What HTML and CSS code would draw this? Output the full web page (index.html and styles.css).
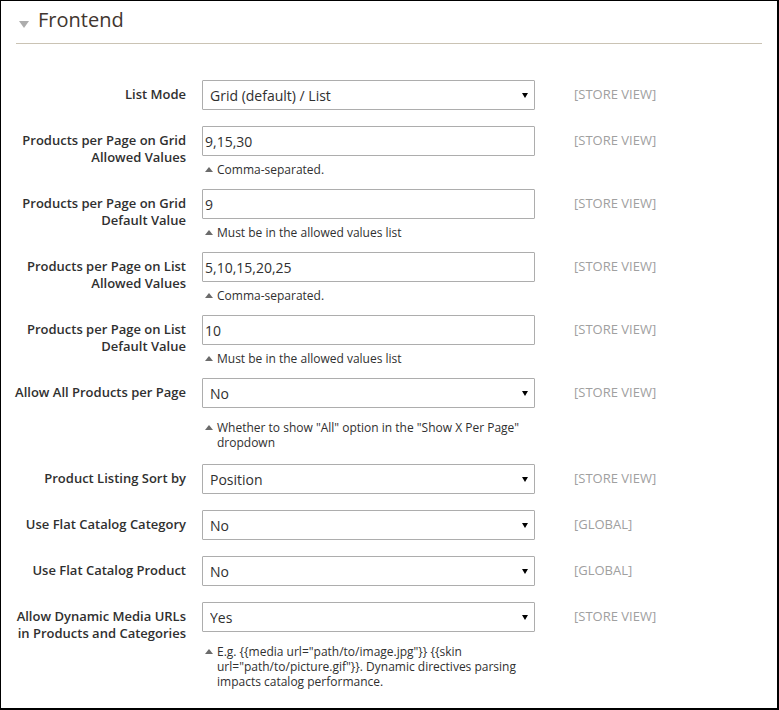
FILE: index.html
```html
<!DOCTYPE html>
<html lang="en">
<head>
<meta charset="utf-8">
<title>Frontend</title>
<link rel="stylesheet" href="styles.css">
</head>
<body>
<div class="frame">
  <div class="section-head">
    <span class="caret"></span>
    <h2 class="title">Frontend</h2>
  </div>
  <div class="fields">
    <div class="row">
      <label class="label">List Mode</label>
      <div class="control">
        <div class="select-wrap"><select class="select"><option>Grid (default) / List</option></select></div>
      </div>
      <div class="scope">[STORE VIEW]</div>
    </div>

    <div class="row">
      <label class="label">Products per Page on Grid Allowed Values</label>
      <div class="control">
        <input class="input" type="text" value="9,15,30">
        <p class="note">Comma-separated.</p>
      </div>
      <div class="scope">[STORE VIEW]</div>
    </div>

    <div class="row">
      <label class="label">Products per Page on Grid Default Value</label>
      <div class="control">
        <input class="input" type="text" value="9">
        <p class="note">Must be in the allowed values list</p>
      </div>
      <div class="scope">[STORE VIEW]</div>
    </div>

    <div class="row">
      <label class="label">Products per Page on List Allowed Values</label>
      <div class="control">
        <input class="input" type="text" value="5,10,15,20,25">
        <p class="note">Comma-separated.</p>
      </div>
      <div class="scope">[STORE VIEW]</div>
    </div>

    <div class="row">
      <label class="label">Products per Page on List Default Value</label>
      <div class="control">
        <input class="input" type="text" value="10">
        <p class="note">Must be in the allowed values list</p>
      </div>
      <div class="scope">[STORE VIEW]</div>
    </div>

    <div class="row">
      <label class="label">Allow All Products per Page</label>
      <div class="control">
        <div class="select-wrap"><select class="select"><option>No</option></select></div>
        <p class="note note-sel">Whether to show "All" option in the "Show X Per Page" dropdown</p>
      </div>
      <div class="scope">[STORE VIEW]</div>
    </div>

    <div class="row">
      <label class="label">Product Listing Sort by</label>
      <div class="control">
        <div class="select-wrap"><select class="select"><option>Position</option></select></div>
      </div>
      <div class="scope">[STORE VIEW]</div>
    </div>

    <div class="row">
      <label class="label">Use Flat Catalog Category</label>
      <div class="control">
        <div class="select-wrap"><select class="select"><option>No</option></select></div>
      </div>
      <div class="scope">[GLOBAL]</div>
    </div>

    <div class="row">
      <label class="label">Use Flat Catalog Product</label>
      <div class="control">
        <div class="select-wrap"><select class="select"><option>No</option></select></div>
      </div>
      <div class="scope">[GLOBAL]</div>
    </div>

    <div class="row">
      <label class="label">Allow Dynamic Media URLs in Products and Categories</label>
      <div class="control">
        <div class="select-wrap"><select class="select"><option>Yes</option></select></div>
        <p class="note note-sel">E.g. {{media url="path/to/image.jpg"}} {{skin url="path/to/picture.gif"}}. Dynamic directives parsing impacts catalog performance.</p>
      </div>
      <div class="scope">[STORE VIEW]</div>
    </div>
  </div>
</div>
</body>
</html>
```

FILE: styles.css
```css
html, body {
  margin: 0;
  padding: 0;
  background: #fff;
}

body {
  font-family: "Open Sans", "Liberation Sans", Arial, sans-serif;
  color: #303030;
}

.frame {
  width: 779px;
  height: 710px;
  box-sizing: border-box;
  border-style: solid;
  border-color: #000;
  border-width: 1px 2px 2px 1px;
  padding: 0 15px;
  overflow: hidden;
  background: #fff;
}

.section-head {
  display: flex;
  align-items: center;
  padding: 7px 0 11px;
  border-bottom: 1px solid #cac3b4;
}

.caret {
  width: 0;
  height: 0;
  border-left: 5px solid transparent;
  border-right: 5px solid transparent;
  border-top: 7px solid #adadad;
  margin: 8px 9px 0 3px;
}

.title {
  margin: 0;
  font-size: 20px;
  line-height: 24px;
  font-weight: 400;
  color: #41362f;
}

.fields {
  padding-top: 36px;
  margin-left: -4px;
}

.row {
  display: grid;
  grid-template-columns: 174px 333px 1fr;
  column-gap: 16px;
  margin-bottom: 16px;
}

.label {
  text-align: right;
  font-size: 13px;
  line-height: 17px;
  font-weight: 600;
  color: #303030;
  padding-top: 6px;
}

.control {
  min-width: 0;
}

.input,
.select {
  display: block;
  width: 333px;
  height: 30px;
  box-sizing: border-box;
  margin: 0;
  border: 1px solid #adadad;
  border-radius: 1px;
  background: #fff;
  font-family: "Open Sans", "Liberation Sans", Arial, sans-serif;
  font-size: 14px;
  color: #303030;
  outline: none;
}

.input {
  padding: 0 2px;
}

.select-wrap {
  position: relative;
}

.select {
  appearance: none;
  -webkit-appearance: none;
  padding: 0 24px 0 7px;
}

.select-wrap::after {
  content: "";
  position: absolute;
  right: 7px;
  top: 13px;
  width: 0;
  height: 0;
  border-left: 3px solid transparent;
  border-right: 3px solid transparent;
  border-top: 5px solid #000;
  pointer-events: none;
}

.note {
  position: relative;
  margin: 6px 0 -4px;
  padding-left: 15px;
  font-size: 12px;
  line-height: 15px;
  color: #303030;
}

.note-sel {
  margin-top: 12px;
  margin-bottom: -2px;
}

.note::before {
  content: "";
  position: absolute;
  left: 3px;
  top: 5px;
  width: 0;
  height: 0;
  border-left: 4px solid transparent;
  border-right: 4px solid transparent;
  border-bottom: 5px solid #6b6b6b;
}

.scope {
  padding: 6px 0 0 23px;
  font-size: 13px;
  line-height: 17px;
  color: #a0a0a0;
  white-space: nowrap;
}
```
